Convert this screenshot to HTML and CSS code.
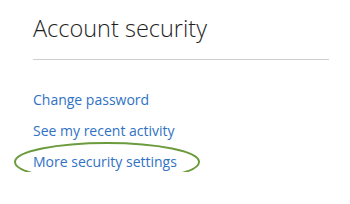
FILE: index.html
```html
<!DOCTYPE html>
<html lang="en">
<head>
    <meta charset="UTF-8">
    <title>Account security</title>
    <link rel="stylesheet" href="styles.css">
</head>
<body>
    <div class="painel">
        <h1 class="titulo">Account security</h1>
        <div class="linhas">
            <a class="link" href="#">Change password</a>
            <a class="link" href="#">See my recent activity</a>
            <a class="link marcado" href="#">More security settings
                <!-- marca verde à mão -->
                <svg class="oval" width="190" height="42" viewBox="0 0 190 42">
                    <ellipse cx="94" cy="21" rx="92" ry="19" fill="none" stroke="#6b9b3c" stroke-width="2"/>
                </svg>
            </a>
        </div>
    </div>
</body>
</html>
```

FILE: styles.css
```css
body {
    margin: 0;
    background-color: #fff;
    font-family: "Open Sans", "Noto Sans", sans-serif;
}

.painel {
    padding: 11px 21px 0 33px;
}

.titulo {
    margin: 0;
    font-size: 23.5px;
    font-weight: 300;
    color: #1e1e1e;
    line-height: 34px;
    padding-bottom: 14px;
    border-bottom: 1px solid #cfcfcf;
}

.linhas {
    display: flex;
    flex-direction: column;
    align-items: flex-start;
    gap: 11px;
    padding-top: 30px;
}

.link {
    font-size: 14px;
    line-height: 20px;
    color: #2f72c4;
    text-decoration: none;
}

.marcado {
    position: relative;
}

.oval {
    position: absolute;
    left: -20px;
    top: -11px;
}
```
